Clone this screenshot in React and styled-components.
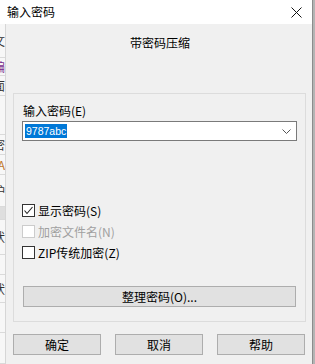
import React from "react";
import styled, { createGlobalStyle } from "styled-components";

const GlobalStyle = createGlobalStyle`
  html, body { margin: 0; padding: 0; background: #f0f0f0; }
  body { font-family: "Noto Sans CJK SC", "Noto Sans", sans-serif; font-size: 12px; color: #000; }
  * { box-sizing: border-box; }
`;

const Screen = styled.div`display: flex; width: 315px; height: 364px; overflow: hidden;`;
const Window = styled.div`width: 312px; display: flex; flex-direction: column;`;
const RightStrip = styled.div`width: 3px; background: #b4b4b4; border-left: 1px solid #8c8c8c;`;

const TitleBar = styled.div`
  height: 24px; background: #fff; display: flex; align-items: center;
  justify-content: space-between; padding: 0 10px 0 7px; flex-shrink: 0;
`;
const TitleText = styled.span`font-size: 12px; line-height: 16px;`;

const BodyRow = styled.div`display: flex; flex: 1;`;
const LeftStrip = styled.div`
  width: 6px; display: flex; flex-direction: column; background: #f7f7f7;
  border-right: 1px solid #d6d6d6; overflow: hidden;
`;
const StripCell = styled.div`
  height: ${p => p.h}px; display: flex; align-items: center; justify-content: flex-end;
  border-bottom: 1px solid #dadada; background: ${p => p.bg || "transparent"};
  color: ${p => p.color || "#333"}; font-size: 12px; line-height: 14px;
  white-space: nowrap; overflow: hidden;
`;

const Body = styled.div`
  flex: 1; background: #f0f0f0; display: flex; flex-direction: column;
  padding: 11px 6px 9px 7px;
`;
const Heading = styled.div`text-align: center; line-height: 16px; height: 16px; padding-left: 1px;`;

const Group = styled.div`
  margin-top: 42px; border: 1px solid #dcdcdc; display: flex; flex-direction: column;
  padding: 9px 8px 14px 8px;
`;
const Label = styled.div`line-height: 16px; height: 16px; padding-left: 1px;`;

const Combo = styled.div`
  margin-top: 2px; height: 20px; background: #fff; border: 1px solid #7a7a7a;
  display: flex; align-items: center; justify-content: space-between; padding: 0 5px 0 2px;
`;
const Selected = styled.span`
  background: #0078d7; color: #fff; font-family: "Liberation Sans", Arial, sans-serif;
  font-size: 10.5px; line-height: 14px; padding: 0 1px;
`;

const Checks = styled.div`margin-top: 59px; display: flex; flex-direction: column;`;
const CheckRow = styled.div`
  height: 21px; display: flex; align-items: center; gap: 3px;
  color: ${p => (p.disabled ? "#a0a0a0" : "#000")};
`;
const Box = styled.span`
  width: 13px; height: 13px; background: #fff; display: flex; align-items: center; justify-content: center;
  border: 1px solid ${p => (p.disabled ? "#cccccc" : "#333")};
`;

const Button = styled.div`
  height: 21px; background: #e1e1e1; border: 1px solid #adadad;
  display: flex; align-items: center; justify-content: center; line-height: 16px;
  width: ${p => p.w || "auto"};
`;
const WideButton = styled(Button)`margin-top: 23px; margin-left: 1px; margin-right: 1px;`;

const Footer = styled.div`margin-top: 12px; display: flex; justify-content: space-between; padding-right: 1px;`;

const Check = () => (
  <svg width="11" height="11" viewBox="0 0 11 11">
    <polyline points="1.5,5.5 4,8.5 9.5,2" fill="none" stroke="#222" strokeWidth="1.1" />
  </svg>
);

const CheckBox = ({ checked, disabled, children }) => (
  <CheckRow disabled={disabled}>
    <Box disabled={disabled}>{checked && <Check />}</Box>
    <span>{children}</span>
  </CheckRow>
);

const stripCells = [
  { h: 34, t: "文" }, { h: 18, t: "编", color: "#7a2f8f" }, { h: 20, t: "面" }, { h: 39, t: "" },
  { h: 20, t: "密" }, { h: 20, t: "A", color: "#c0772a" }, { h: 32, t: "护" }, { h: 13, t: "", bg: "#dedede" },
  { h: 35, t: "状" }, { h: 20, t: "▌", color: "#2a5db0" }, { h: 28, t: "状" }, { h: 30, t: "" }, { h: 31, t: "" },
];

export default function App() {
  return (
    <Screen>
      <GlobalStyle />
      <Window>
        <TitleBar>
          <TitleText>输入密码</TitleText>
          <svg width="11" height="11" viewBox="0 0 11 11">
            <path d="M0.5 0.5 L10.5 10.5 M10.5 0.5 L0.5 10.5" stroke="#111" strokeWidth="1" />
          </svg>
        </TitleBar>
        <BodyRow>
          <LeftStrip>
            {stripCells.map((c, i) => (
              <StripCell key={i} h={c.h} color={c.color} bg={c.bg}>{c.t}</StripCell>
            ))}
          </LeftStrip>
          <Body>
            <Heading>带密码压缩</Heading>
            <Group>
              <Label>输入密码(E)</Label>
              <Combo>
                <Selected>9787abc</Selected>
                <svg width="9" height="5" viewBox="0 0 9 5">
                  <polyline points="0.5,0.5 4.5,4.5 8.5,0.5" fill="none" stroke="#555" strokeWidth="1" />
                </svg>
              </Combo>
              <Checks>
                <CheckBox checked>显示密码(S)</CheckBox>
                <CheckBox disabled>加密文件名(N)</CheckBox>
                <CheckBox>ZIP传统加密(Z)</CheckBox>
              </Checks>
              <WideButton>整理密码(O)...</WideButton>
            </Group>
            <Footer>
              <Button w="88px">确定</Button>
              <Button w="88px">取消</Button>
              <Button w="88px">帮助</Button>
            </Footer>
          </Body>
        </BodyRow>
      </Window>
      <RightStrip />
    </Screen>
  );
}
